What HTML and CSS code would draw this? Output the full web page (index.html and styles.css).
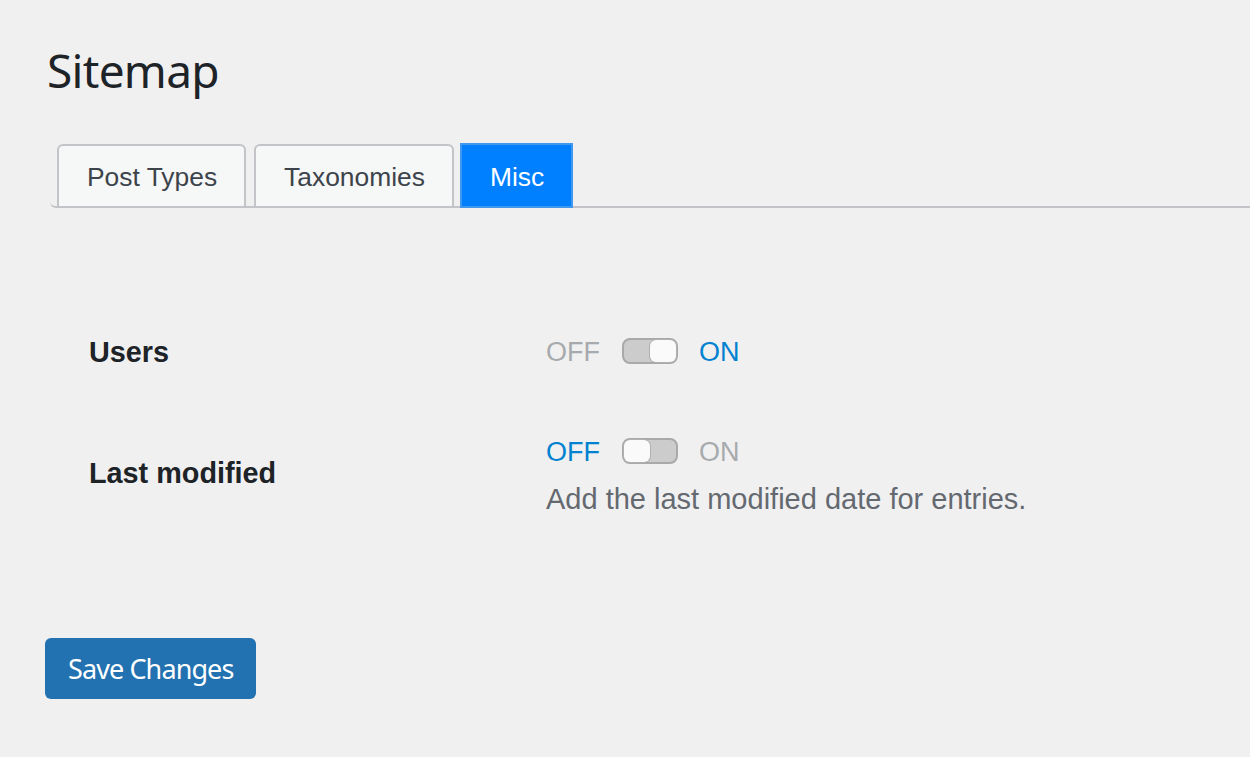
FILE: index.html
```html
<!DOCTYPE html>
<html lang="en">
<head>
<meta charset="utf-8">
<title>Sitemap</title>
<link rel="stylesheet" href="styles.css">
</head>
<body>
<div class="wrap">
  <h1 class="page-title">Sitemap</h1>
  <nav class="tabs">
    <a class="tab">Post Types</a>
    <a class="tab">Taxonomies</a>
    <a class="tab tab-active">Misc</a>
  </nav>
  <div class="form">
    <div class="row">
      <div class="label">Users</div>
      <div class="control">
        <div class="switch-line">
          <span class="state">OFF</span>
          <span class="switch switch-on"><span class="knob"></span></span>
          <span class="state state-active">ON</span>
        </div>
      </div>
    </div>
    <div class="row row-desc">
      <div class="label label-desc">Last modified</div>
      <div class="control">
        <div class="switch-line">
          <span class="state state-active">OFF</span>
          <span class="switch"><span class="knob"></span></span>
          <span class="state">ON</span>
        </div>
        <p class="description">Add the last modified date for entries.</p>
      </div>
    </div>
  </div>
  <button class="button-primary" type="button">Save Changes</button>
</div>
</body>
</html>
```

FILE: styles.css
```css
html, body {
  margin: 0;
  padding: 0;
  background: #f0f0f1;
}

body {
  font-family: "Liberation Sans", Arial, sans-serif;
  color: #1d2327;
}

.wrap {
  padding-left: 45px;
}

.page-title {
  margin: 40px 0 0 2px;
  font-family: "Noto Sans", "Open Sans", sans-serif;
  font-weight: 400;
  font-size: 46px;
  line-height: 60px;
  letter-spacing: -0.7px;
  color: #1d2327;
}

.tabs {
  display: flex;
  align-items: flex-end;
  margin: 43px 0 0 5px;
  padding-left: 7px;
  border-bottom: 2px solid #c3c4c7;
  border-bottom-left-radius: 6px;
}

.tab {
  display: block;
  padding: 14px 27px 12px 28px;
  font-size: 26.4px;
  line-height: 34px;
  color: #3c434a;
  background: #f6f7f7;
  border: 2px solid #c3c4c7;
  border-bottom: 0;
  border-radius: 6px 6px 0 0;
  margin-right: 8px;
  text-decoration: none;
  white-space: nowrap;
}

.tab-active {
  margin-left: -2px;
  margin-bottom: -2px;
  padding: 15px 27px 12px 28px;
  color: #ffffff;
  background: #0080ff;
  border: 2px solid #3f97ee;
  border-radius: 0;
}

.form {
  margin: 124px 0 0 44px;
}

.row {
  display: flex;
  align-items: center;
}

.row + .row {
  margin-top: 60px;
}

.label {
  width: 457px;
  flex: none;
  font-weight: 700;
  font-size: 28.8px;
  line-height: 40px;
  color: #1d2327;
}

.label-desc {
  padding-bottom: 5px;
}

.control {
  display: flex;
  flex-direction: column;
}

.switch-line {
  display: flex;
  align-items: center;
  height: 40px;
  font-size: 27px;
  line-height: 40px;
}

.state {
  color: #a7aaad;
}

.state-active {
  color: #0082d0;
}

.switch {
  display: flex;
  justify-content: flex-start;
  box-sizing: border-box;
  width: 56px;
  height: 26px;
  margin: -3px 21px 0 22px;
  background: #cccccc;
  border: 2px solid #a9a9a9;
  border-radius: 8px;
}

.switch-on {
  justify-content: flex-end;
}

.knob {
  display: block;
  box-sizing: border-box;
  width: 26px;
  height: 22px;
  background: #fafafa;
  border-radius: 6px;
  box-shadow: 0 0 0 1px #b0b0b0;
}

.description {
  margin: 7px 0 0 0;
  font-size: 29px;
  line-height: 40px;
  color: #646970;
}

.button-primary {
  display: block;
  margin-top: 119px;
  height: 61px;
  padding: 0 23px;
  font-family: "Noto Sans", "Open Sans", sans-serif;
  font-size: 27px;
  letter-spacing: -0.9px;
  color: #ffffff;
  background: #2271b1;
  border: 0;
  border-radius: 6px;
}
```
